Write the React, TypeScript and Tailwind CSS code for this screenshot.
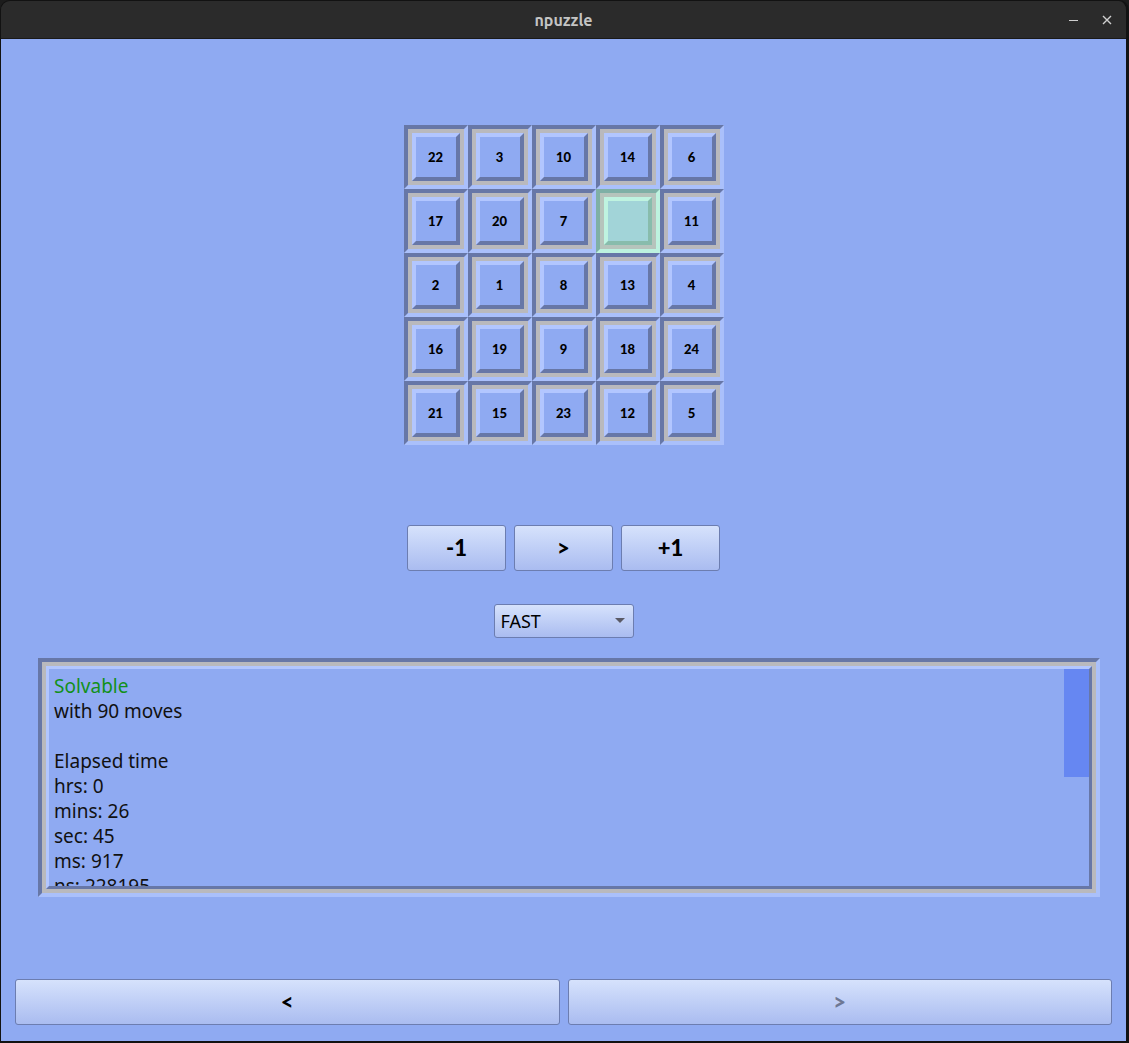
import React from "react";

const grid = [
  [22, 3, 10, 14, 6],
  [17, 20, 7, 0, 11],
  [2, 1, 8, 13, 4],
  [16, 19, 9, 18, 24],
  [21, 15, 23, 12, 5],
];

function Tile({ n }: { n: number }) {
  if (n === 0) {
    return (
      <div className="w-16 h-16 border-4 border-t-[#7fb0a6] border-l-[#7fb0a6] border-b-[#bdf2df] border-r-[#bdf2df]">
        <div className="w-full h-full border-4 border-[#b6c4bc]">
          <div className="w-full h-full border-4 border-t-[#bff3e0] border-l-[#bff3e0] border-b-[#88bcac] border-r-[#88bcac] bg-[#a2d4d8]" />
        </div>
      </div>
    );
  }
  return (
    <div className="w-16 h-16 border-4 border-t-[#6777a7] border-l-[#6777a7] border-b-[#aac0fb] border-r-[#aac0fb]">
      <div className="w-full h-full border-4 border-[#b9b9bd]">
        <div className="w-full h-full border-4 border-t-[#b2c6ff] border-l-[#b2c6ff] border-b-[#6777a7] border-r-[#6777a7] bg-[#8faaf2] flex items-center justify-center">
          <span className="text-[13px] font-black text-black leading-none" style={{ fontFamily: "Lato, 'DejaVu Sans', sans-serif" }}>
            {n}
          </span>
        </div>
      </div>
    </div>
  );
}

function Btn({ label, w, disabled }: { label: string; w: string; disabled?: boolean }) {
  return (
    <div
      className={`${w} h-[46px] rounded-[3px] border border-[#6c7db0] bg-gradient-to-b from-[#d6e2fc] to-[#aabcf0] flex items-center justify-center`}
    >
      <span
        className={`text-[22px] font-black leading-none ${disabled ? "text-[#6e7894]" : "text-black"}`}
        style={{ fontFamily: "Lato, 'DejaVu Sans', sans-serif" }}
      >
        {label}
      </span>
    </div>
  );
}

export default function App() {
  const lines = [
    "with 90 moves",
    "\u00a0",
    "Elapsed time",
    "hrs: 0",
    "mins: 26",
    "sec: 45",
    "ms: 917",
    "ns: 228195",
  ];
  return (
    <div className="w-[1129px] h-[1043px] bg-[#1c1c1c] overflow-hidden">
      <div className="w-full h-full flex flex-col rounded-t-[10px] overflow-hidden border border-r-[3px] border-b-[2px] border-[#121212]">
        <div className="h-[38px] bg-[#2b2b2b] flex items-center relative shrink-0 border-b border-[#1a1a1a]">
          <div
            className="flex-1 text-center text-[16px] font-bold text-[#c4c4c4]"
            style={{ fontFamily: "Ubuntu, 'Noto Sans', sans-serif" }}
          >
            npuzzle
          </div>
          <div className="absolute right-[14px] top-0 h-full flex items-center gap-[24px] text-[#d0d0d0]">
            <div className="w-[9px] h-[1px] bg-[#cfcfcf] mt-[2px]" />
            <svg width="10" height="10" viewBox="0 0 10 10">
              <path d="M1 1 L9 9 M9 1 L1 9" stroke="#d0d0d0" strokeWidth="1.4" />
            </svg>
          </div>
        </div>
        <div className="flex-1 bg-[#8faaf2] flex flex-col items-center">
          <div className="mt-[86px] flex flex-col">
            {grid.map((row, i) => (
              <div key={i} className="flex">
                {row.map((n, j) => (
                  <Tile key={j} n={n} />
                ))}
              </div>
            ))}
          </div>
          <div className="mt-[80px] flex gap-[8px]">
            <Btn label="-1" w="w-[99px]" />
            <Btn label=">" w="w-[99px]" />
            <Btn label="+1" w="w-[99px]" />
          </div>
          <div className="mt-[33px] w-[140px] h-[34px] rounded-[3px] border border-[#6c7db0] bg-gradient-to-b from-[#d6e2fc] to-[#aabcf0] flex items-center justify-between pl-[6px] pr-[8px]">
            <span className="text-[18px] text-black" style={{ fontFamily: "'Noto Sans', sans-serif" }}>
              FAST
            </span>
            <svg width="10" height="6" viewBox="0 0 10 6">
              <path d="M0 0 L10 0 L5 5 Z" fill="#5a5a66" />
            </svg>
          </div>
          <div className="mt-[20px] self-start ml-[37px] w-[1062px] h-[239px] border-4 border-t-[#6777a7] border-l-[#6777a7] border-b-[#aac0fb] border-r-[#aac0fb]">
            <div className="w-full h-full border-4 border-[#b9b9bd]">
              <div className="w-full h-full border-[3px] border-t-[#b2c6ff] border-l-[#b2c6ff] border-b-[#6777a7] border-r-[#6777a7] bg-[#8faaf2] flex overflow-hidden">
                <div
                  className="flex-1 pl-[5px] pt-[5px] text-[19px] leading-[25px] text-[#111] overflow-hidden"
                  style={{ fontFamily: "'Noto Sans', sans-serif" }}
                >
                  <div className="text-[#12901a]">Solvable</div>
                  {lines.map((l, i) => (
                    <div key={i}>{l}</div>
                  ))}
                </div>
                <div className="w-[25px] flex flex-col">
                  <div className="h-[108px] bg-[#6687f2]" />
                </div>
              </div>
            </div>
          </div>
          <div className="mt-auto mb-[16px] w-full px-[14px] flex gap-[8px]">
            <div className="flex-1">
              <Btn label="<" w="w-full" />
            </div>
            <div className="flex-1">
              <Btn label=">" w="w-full" disabled />
            </div>
          </div>
        </div>
      </div>
    </div>
  );
}
